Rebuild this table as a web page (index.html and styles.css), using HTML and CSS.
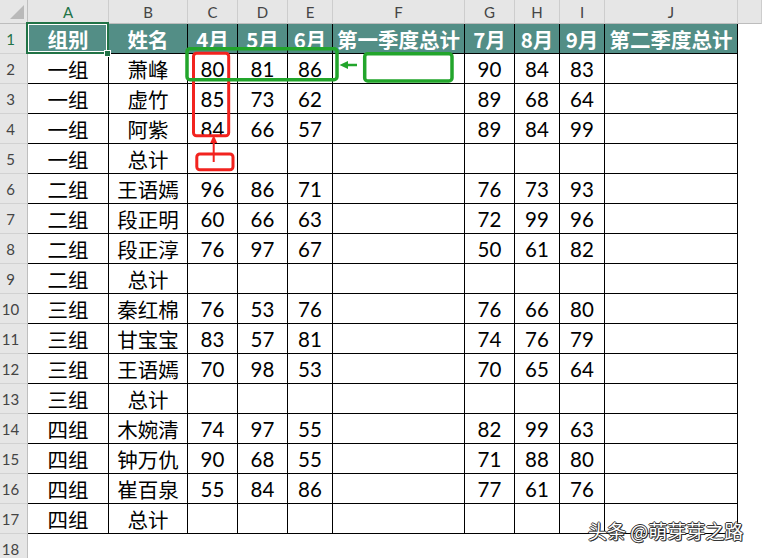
FILE: index.html
```html
<!DOCTYPE html>
<html lang="zh-CN">
<head>
<meta charset="utf-8">
<title>Sheet</title>
<link rel="stylesheet" href="styles.css">
</head>
<body>
<div class="sheet">
  <div class="row hdr">
    <div class="c rh corner"><span class="tri"></span></div>
    <div class="c ca sel">A</div><div class="c cb">B</div><div class="c cc">C</div><div class="c cd">D</div><div class="c ce">E</div><div class="c cf">F</div><div class="c cg">G</div><div class="c ch">H</div><div class="c ci">I</div><div class="c cj">J</div><div class="c ck"></div>
  </div>
  <div class="row r1">
    <div class="c rh sel">1</div>
    <div class="c ca">组别</div><div class="c cb">姓名</div><div class="c cc">4月</div><div class="c cd">5月</div><div class="c ce">6月</div><div class="c cf">第一季度总计</div><div class="c cg">7月</div><div class="c ch">8月</div><div class="c ci">9月</div><div class="c cj">第二季度总计</div><div class="c ck"></div>
  </div>
  <div class="row"><div class="c rh">2</div><div class="c ca">一组</div><div class="c cb">萧峰</div><div class="c cc">80</div><div class="c cd">81</div><div class="c ce">86</div><div class="c cf"></div><div class="c cg">90</div><div class="c ch">84</div><div class="c ci">83</div><div class="c cj"></div><div class="c ck"></div></div>
  <div class="row"><div class="c rh">3</div><div class="c ca">一组</div><div class="c cb">虚竹</div><div class="c cc">85</div><div class="c cd">73</div><div class="c ce">62</div><div class="c cf"></div><div class="c cg">89</div><div class="c ch">68</div><div class="c ci">64</div><div class="c cj"></div><div class="c ck"></div></div>
  <div class="row"><div class="c rh">4</div><div class="c ca">一组</div><div class="c cb">阿紫</div><div class="c cc">84</div><div class="c cd">66</div><div class="c ce">57</div><div class="c cf"></div><div class="c cg">89</div><div class="c ch">84</div><div class="c ci">99</div><div class="c cj"></div><div class="c ck"></div></div>
  <div class="row"><div class="c rh">5</div><div class="c ca">一组</div><div class="c cb">总计</div><div class="c cc"></div><div class="c cd"></div><div class="c ce"></div><div class="c cf"></div><div class="c cg"></div><div class="c ch"></div><div class="c ci"></div><div class="c cj"></div><div class="c ck"></div></div>
  <div class="row"><div class="c rh">6</div><div class="c ca">二组</div><div class="c cb">王语嫣</div><div class="c cc">96</div><div class="c cd">86</div><div class="c ce">71</div><div class="c cf"></div><div class="c cg">76</div><div class="c ch">73</div><div class="c ci">93</div><div class="c cj"></div><div class="c ck"></div></div>
  <div class="row"><div class="c rh">7</div><div class="c ca">二组</div><div class="c cb">段正明</div><div class="c cc">60</div><div class="c cd">66</div><div class="c ce">63</div><div class="c cf"></div><div class="c cg">72</div><div class="c ch">99</div><div class="c ci">96</div><div class="c cj"></div><div class="c ck"></div></div>
  <div class="row"><div class="c rh">8</div><div class="c ca">二组</div><div class="c cb">段正淳</div><div class="c cc">76</div><div class="c cd">97</div><div class="c ce">67</div><div class="c cf"></div><div class="c cg">50</div><div class="c ch">61</div><div class="c ci">82</div><div class="c cj"></div><div class="c ck"></div></div>
  <div class="row"><div class="c rh">9</div><div class="c ca">二组</div><div class="c cb">总计</div><div class="c cc"></div><div class="c cd"></div><div class="c ce"></div><div class="c cf"></div><div class="c cg"></div><div class="c ch"></div><div class="c ci"></div><div class="c cj"></div><div class="c ck"></div></div>
  <div class="row"><div class="c rh">10</div><div class="c ca">三组</div><div class="c cb">秦红棉</div><div class="c cc">76</div><div class="c cd">53</div><div class="c ce">76</div><div class="c cf"></div><div class="c cg">76</div><div class="c ch">66</div><div class="c ci">80</div><div class="c cj"></div><div class="c ck"></div></div>
  <div class="row"><div class="c rh">11</div><div class="c ca">三组</div><div class="c cb">甘宝宝</div><div class="c cc">83</div><div class="c cd">57</div><div class="c ce">81</div><div class="c cf"></div><div class="c cg">74</div><div class="c ch">76</div><div class="c ci">79</div><div class="c cj"></div><div class="c ck"></div></div>
  <div class="row"><div class="c rh">12</div><div class="c ca">三组</div><div class="c cb">王语嫣</div><div class="c cc">70</div><div class="c cd">98</div><div class="c ce">53</div><div class="c cf"></div><div class="c cg">70</div><div class="c ch">65</div><div class="c ci">64</div><div class="c cj"></div><div class="c ck"></div></div>
  <div class="row"><div class="c rh">13</div><div class="c ca">三组</div><div class="c cb">总计</div><div class="c cc"></div><div class="c cd"></div><div class="c ce"></div><div class="c cf"></div><div class="c cg"></div><div class="c ch"></div><div class="c ci"></div><div class="c cj"></div><div class="c ck"></div></div>
  <div class="row"><div class="c rh">14</div><div class="c ca">四组</div><div class="c cb">木婉清</div><div class="c cc">74</div><div class="c cd">97</div><div class="c ce">55</div><div class="c cf"></div><div class="c cg">82</div><div class="c ch">99</div><div class="c ci">63</div><div class="c cj"></div><div class="c ck"></div></div>
  <div class="row"><div class="c rh">15</div><div class="c ca">四组</div><div class="c cb">钟万仇</div><div class="c cc">90</div><div class="c cd">68</div><div class="c ce">55</div><div class="c cf"></div><div class="c cg">71</div><div class="c ch">88</div><div class="c ci">80</div><div class="c cj"></div><div class="c ck"></div></div>
  <div class="row"><div class="c rh">16</div><div class="c ca">四组</div><div class="c cb">崔百泉</div><div class="c cc">55</div><div class="c cd">84</div><div class="c ce">86</div><div class="c cf"></div><div class="c cg">77</div><div class="c ch">61</div><div class="c ci">76</div><div class="c cj"></div><div class="c ck"></div></div>
  <div class="row"><div class="c rh">17</div><div class="c ca">四组</div><div class="c cb">总计</div><div class="c cc"></div><div class="c cd"></div><div class="c ce"></div><div class="c cf"></div><div class="c cg"></div><div class="c ch"></div><div class="c ci"></div><div class="c cj"></div><div class="c ck"></div></div>
  <div class="row empty"><div class="c rh">18</div><div class="c ck"></div></div>

  <svg class="overlay" width="762" height="558" viewBox="0 0 762 558">
    <rect x="27" y="23" width="81" height="30" fill="none" stroke="#217346" stroke-width="2"/>
    <rect x="28.5" y="24.5" width="78" height="27" fill="none" stroke="#ffffff" stroke-width="1"/>
    <rect x="104.5" y="50.5" width="6" height="6" fill="#217346" stroke="#ffffff" stroke-width="1"/>

    <rect x="193.5" y="53.2" width="35.2" height="82.5" rx="3" fill="none" stroke="#f2231f" stroke-width="3"/>
    <rect x="196.8" y="154" width="36.2" height="15.7" rx="3" fill="none" stroke="#f2231f" stroke-width="3"/>
    <line x1="213.7" y1="162" x2="213.7" y2="140" stroke="#f2231f" stroke-width="2"/>
    <polygon points="213.7,135 217.2,143 210.2,143" fill="#f2231f"/>

    <rect x="187" y="48.7" width="150" height="31" rx="3" fill="none" stroke="#22a52b" stroke-width="3.5"/>
    <rect x="364.7" y="53.7" width="87.3" height="27.3" rx="3" fill="none" stroke="#22a52b" stroke-width="3.5"/>
    <line x1="346" y1="65" x2="357" y2="65" stroke="#22a52b" stroke-width="2.5"/>
    <polygon points="339.5,65 348,61 348,69" fill="#22a52b"/>
  </svg>
  <div class="watermark">头条 @萌芽芽之路</div>
</div>
</body>
</html>
```
FILE: styles.css
```css
* { box-sizing: border-box; }
html, body { margin: 0; padding: 0; background: #ffffff; }
.sheet {
  position: relative;
  width: 762px;
  height: 558px;
  overflow: hidden;
  background: #ffffff;
  font-family: Lato, "Noto Sans CJK SC", sans-serif;
  color: #000;
}
.row {
  display: flex;
  height: 30px;
}
.c {
  flex: none;
  display: flex;
  align-items: center;
  justify-content: center;
  height: 100%;
  border-right: 1px solid #000;
  border-bottom: 1px solid #000;
  font-size: 20.5px;
  white-space: nowrap;
  overflow: hidden;
}
.ca { width: 81px; }
.cb { width: 79px; }
.cc { width: 50px; }
.cd { width: 50px; }
.ce { width: 45px; }
.cf { width: 132px; }
.cg { width: 50px; }
.ch { width: 45px; }
.ci { width: 45px; }
.cj { width: 133px; }
.ck { flex: 1; border: none; }

.rh {
  width: 28px;
  background: #e6e6e6;
  border-right: 1px solid #bfbfbf;
  border-bottom: 1px solid #d2d2d2;
  font-family: Lato, "Noto Sans", sans-serif;
  font-size: 15px;
  color: #444;
  padding-right: 6px;
}
.rh.sel { color: #217346; }

.hdr { height: 24px; }
.hdr .c {
  background: #e6e6e6;
  border-right: 1px solid #cdcdcd;
  border-bottom: 1px solid #bdbdbd;
  font-size: 15px;
  color: #444;
}
.hdr .c.sel { color: #217346; }
.hdr .rh { border-right-color: #bfbfbf; }
.corner { position: relative; }
.tri {
  position: absolute;
  right: 3px;
  bottom: 4px;
  width: 0;
  height: 0;
  border-left: 14px solid transparent;
  border-bottom: 14px solid #b9b9b9;
}

.r1 .c {
  background: #538e86;
  color: #ffffff;
  font-weight: 700;
  font-family: "Noto Sans CJK SC", Lato, sans-serif;
}
.r1 .rh {
  background: #e6e6e6;
  color: #217346;
  font-weight: 400;
  font-family: Lato, sans-serif;
}
.r1 .ck { background: #ffffff; }

.empty .rh { border-bottom: none; }

.overlay {
  position: absolute;
  left: 0;
  top: 0;
  pointer-events: none;
}
.watermark {
  position: absolute;
  left: 588px;
  top: 520px;
  font-family: "Noto Sans CJK SC", sans-serif;
  font-size: 19px;
  line-height: 22px;
  color: #ffffff;
  text-shadow: 1px 0 0 #333, -1px 0 0 #333, 0 1px 0 #333, 0 -1px 0 #333, 1px 1px 0 #333;
  white-space: nowrap;
}
```
